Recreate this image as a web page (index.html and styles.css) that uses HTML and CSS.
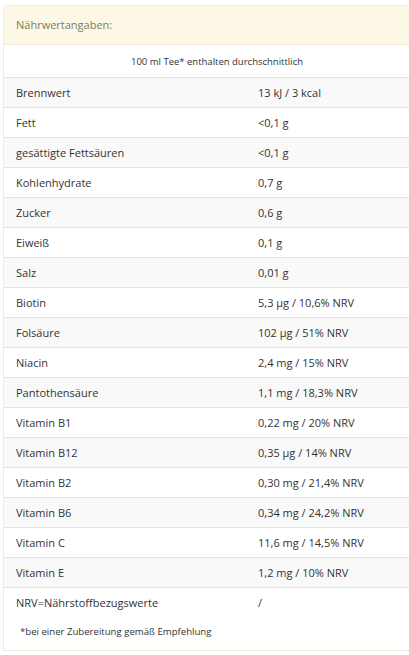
FILE: index.html
```html
<!DOCTYPE html>
<html lang="de">
<head>
<meta charset="utf-8">
<link rel="stylesheet" href="styles.css">
</head>
<body>
<div class="panel">
  <div class="panel-heading">Nährwertangaben:</div>
  <div class="intro">100 ml Tee* enthalten durchschnittlich</div>
  <div class="rows">
    <div class="row"><span class="label">Brennwert</span><span class="value">13 kJ / 3 kcal</span></div>
    <div class="row"><span class="label">Fett</span><span class="value">&lt;0,1 g</span></div>
    <div class="row"><span class="label">gesättigte Fettsäuren</span><span class="value">&lt;0,1 g</span></div>
    <div class="row"><span class="label">Kohlenhydrate</span><span class="value">0,7 g</span></div>
    <div class="row"><span class="label">Zucker</span><span class="value">0,6 g</span></div>
    <div class="row"><span class="label">Eiweiß</span><span class="value">0,1 g</span></div>
    <div class="row"><span class="label">Salz</span><span class="value">0,01 g</span></div>
    <div class="row"><span class="label">Biotin</span><span class="value">5,3 µg / 10,6% NRV</span></div>
    <div class="row"><span class="label">Folsäure</span><span class="value">102 µg / 51% NRV</span></div>
    <div class="row"><span class="label">Niacin</span><span class="value">2,4 mg / 15% NRV</span></div>
    <div class="row"><span class="label">Pantothensäure</span><span class="value">1,1 mg / 18,3% NRV</span></div>
    <div class="row"><span class="label">Vitamin B1</span><span class="value">0,22 mg / 20% NRV</span></div>
    <div class="row"><span class="label">Vitamin B12</span><span class="value">0,35 µg / 14% NRV</span></div>
    <div class="row"><span class="label">Vitamin B2</span><span class="value">0,30 mg / 21,4% NRV</span></div>
    <div class="row"><span class="label">Vitamin B6</span><span class="value">0,34 mg / 24,2% NRV</span></div>
    <div class="row"><span class="label">Vitamin C</span><span class="value">11,6 mg / 14,5% NRV</span></div>
    <div class="row"><span class="label">Vitamin E</span><span class="value">1,2 mg / 10% NRV</span></div>
    <div class="row"><span class="label">NRV=Nährstoffbezugswerte</span><span class="value">/</span></div>
  </div>
  <div class="footnote">*bei einer Zubereitung gemäß Empfehlung</div>
</div>
</body>
</html>
```
FILE: styles.css
```css
html, body {
  margin: 0;
  padding: 0;
  background: #fff;
  overflow: hidden;
}
body {
  font-family: "Open Sans", "DejaVu Sans", sans-serif;
  color: #333;
}
.panel {
  margin: 5px -6px 0 3px;
  border: 1px solid #f3ecd9;
  border-radius: 3px;
  box-shadow: 0 1px 1px rgba(0,0,0,0.04);
}
.panel-heading {
  background: #fcf8e5;
  color: #7a7c5e;
  font-size: 11px;
  height: 38px;
  line-height: 38px;
  padding-left: 12px;
  border-bottom: 1px solid #f3ecd9;
}
.intro {
  height: 32px;
  line-height: 33px;
  font-size: 9.5px;
  text-align: center;
  padding-left: 16px;
}
.row {
  display: grid;
  grid-template-columns: 254px 1fr;
  height: 30px;
  align-items: center;
  border-top: 1px solid #e2e2e2;
  box-sizing: border-box;
  font-size: 11px;
}
.row:nth-child(odd) {
  background: #f9f9f9;
}
.label {
  padding-left: 12px;
}
.footnote {
  height: 33px;
  line-height: 30px;
  font-size: 9.6px;
  padding-left: 16px;
}
```
